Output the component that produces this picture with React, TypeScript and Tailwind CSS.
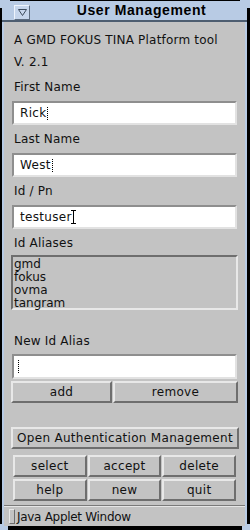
import React from 'react';

const font = "font-['DejaVu_Sans',sans-serif]";

function Field({ value, cursor }: { value: string; cursor: 'dotted' | 'solid' }) {
  return (
    <div className="mx-[8px] h-[24px] bg-white border-2 border-t-[#8e8e8e] border-l-[#8e8e8e] border-b-[#e2e2e2] border-r-[#e2e2e2] flex items-center pl-[6px] text-[12px] text-[#111]">
      <span className="tracking-[0.3px]">{value}</span>
      {cursor === 'dotted' ? (
        <span className="w-[3px] h-[13px] border-l border-dotted border-black ml-[1px]" />
      ) : (
        <span className="relative w-[5px] h-[14px] ml-[-1px]">
          <span className="absolute left-[2px] top-0 w-[1px] h-[14px] bg-black" />
          <span className="absolute left-0 top-0 w-[5px] h-[1px] bg-black" />
          <span className="absolute left-0 bottom-0 w-[5px] h-[1px] bg-black" />
        </span>
      )}
    </div>
  );
}

function Btn({ label, className = '' }: { label: string; className?: string }) {
  return (
    <div
      className={`h-[22px] bg-[#c3c3c3] border-2 border-t-[#e8e8e8] border-l-[#e8e8e8] border-b-[#6e6e6e] border-r-[#6e6e6e] flex items-center justify-center whitespace-nowrap text-[12px] text-[#111] tracking-[0.3px] ${className}`}
    >
      {label}
    </div>
  );
}

function Label({ text, className = '' }: { text: string; className?: string }) {
  return <div className={`h-[20px] flex items-center pl-[10px] text-[12px] text-[#111] tracking-[0.2px] ${className}`}>{text}</div>;
}

export default function App() {
  return (
    <div className={`w-[250px] h-[530px] bg-black relative overflow-hidden ${font}`}>
      <div className="absolute left-0 top-0 w-[10px] h-[8px] bg-[#b8cbe4]" />
      <div className="absolute right-0 top-0 w-[10px] h-[8px] bg-[#b8cbe4]" />
      <div className="absolute left-0 bottom-0 w-[8px] h-[6px] bg-[#b8cbe4]" />
      <div className="absolute right-0 bottom-0 w-[8px] h-[6px] bg-[#b8cbe4]" />
      <div className="relative ml-[2px] mr-[3px] mt-[1px] h-[525px] bg-[#b8cbe4] flex flex-col">
        {/* title bar */}
        <div className="h-[21px] flex items-center relative border-b-2 border-b-[#4d5d70]">
          <div className="absolute left-[12px] top-[4px] w-[16px] h-[15px] bg-[#c6d6ec] border border-t-[#eef4fc] border-l-[#eef4fc] border-b-[#5d6d80] border-r-[#5d6d80] flex items-center justify-center">
            <svg width="9" height="7" viewBox="0 0 9 7">
              <path d="M0.5 0.5 H8.5 L4.5 6.5 Z" fill="none" stroke="#3c4b5c" strokeWidth="1" />
            </svg>
          </div>
          <div className="flex-1 text-center pl-[34px] font-['Liberation_Sans',sans-serif] text-[14px] font-bold text-black tracking-[0.6px]">User Management</div>
        </div>
        {/* content */}
        <div className="flex-1 ml-[2px] mr-[2px] bg-[#c3c3c3] flex flex-col">
          <Label text="A GMD FOKUS TINA Platform tool" className="mt-[8px]" />
          <Label text="V. 2.1" className="mt-[2px]" />
          <Label text="First Name" className="mt-[5px]" />
          <div className="mt-[4px]">
            <Field value="Rick" cursor="dotted" />
          </div>
          <Label text="Last Name" className="mt-[4px]" />
          <div className="mt-[4px]">
            <Field value="West" cursor="dotted" />
          </div>
          <Label text="Id / Pn" className="mt-[4px]" />
          <div className="mt-[4px]">
            <Field value="testuser" cursor="solid" />
          </div>
          <Label text="Id Aliases" className="mt-[4px]" />
          <div className="mt-[2px] mx-[7px] h-[55px] border-2 border-t-[#6e6e6e] border-l-[#6e6e6e] border-b-[#e8e8e8] border-r-[#e8e8e8] flex flex-col pl-[1px] pt-[1px] text-[12px] leading-[13px] text-[#111]">
            <div>gmd</div>
            <div>fokus</div>
            <div>ovma</div>
            <div>tangram</div>
          </div>
          <Label text="New Id Alias" className="mt-[21px]" />
          <div className="mt-[3px] mx-[8px] h-[25px] bg-white border-2 border-t-[#8e8e8e] border-l-[#8e8e8e] border-b-[#e2e2e2] border-r-[#e2e2e2] flex items-center pl-[4px]">
            <span className="w-[2px] h-[13px] border-l border-dotted border-black" />
          </div>
          <div className="mt-[2px] mx-[7px] flex gap-[1px]">
            <Btn label="add" className="w-[101px]" />
            <Btn label="remove" className="flex-1" />
          </div>
          <div className="mt-[24px] ml-[7px] mr-[6px]">
            <Btn label="Open Authentication Management" className="tracking-[0.1px]" />
          </div>
          <div className="mt-[6px] mx-[9px] grid grid-cols-3 gap-x-[1px] gap-y-[2px]">
            <Btn label="select" />
            <Btn label="accept" />
            <Btn label="delete" />
            <Btn label="help" />
            <Btn label="new" />
            <Btn label="quit" />
          </div>
          <div className="mt-[4px] h-[2px] border-t border-t-[#7a7a7a] border-b border-b-[#e6e6e6]" />
          <div className="flex items-center h-[17px] mt-[1px]">
            <div className="ml-[5px] w-[6px] h-[15px] bg-[#c3c3c3] border border-t-[#e8e8e8] border-l-[#e8e8e8] border-b-[#6e6e6e] border-r-[#6e6e6e]" />
            <span className="ml-[2px] text-[12px] text-[#111] tracking-[-0.3px]">Java Applet Window</span>
          </div>
        </div>
      </div>
    </div>
  );
}
